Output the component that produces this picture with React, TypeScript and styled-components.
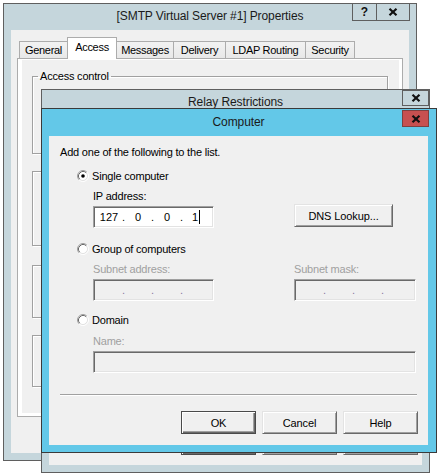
import React, { FC } from 'react';
import styled, { createGlobalStyle } from 'styled-components';

const GlobalStyle = createGlobalStyle`
	html, body {
		margin: 0;
		padding: 0;
		background: #fff;
	}
	body {
		font-family: 'Liberation Sans', Arial, sans-serif;
		font-size: 11px;
		color: #000;
	}
`;

const Desktop = styled.div`
	position: relative;
	width: 438px;
	height: 476px;
	overflow: hidden;
	background: #fff;
`;

// windows sit on the desktop at their own coordinates
const Window = styled.div<{ $x: number; $y: number; $w: number; $h: number; $active?: boolean; $pr?: number }>`
	position: absolute;
	left: ${(p) => p.$x}px;
	top: ${(p) => p.$y}px;
	width: ${(p) => p.$w}px;
	height: ${(p) => p.$h}px;
	box-sizing: border-box;
	border: 1px solid ${(p) => (p.$active ? '#3a3a3a' : '#5f5f5f')};
	background: ${(p) => (p.$active ? '#63c8e8' : '#c5d6dc')};
	padding: 0 ${(p) => p.$pr ?? 7}px 7px 7px;
	display: flex;
	flex-direction: column;
`;

const TitleBar = styled.div<{ $h: number }>`
	height: ${(p) => p.$h}px;
	flex-shrink: 0;
	display: flex;
	align-items: center;
	justify-content: center;
	padding-bottom: 2px;
	box-sizing: border-box;
	font-size: 12px;
	letter-spacing: -0.1px;
	color: #1a1a1a;
`;

const Caption = styled.div<{ $right: number; $top: number }>`
	position: absolute;
	top: ${(p) => p.$top}px;
	right: ${(p) => p.$right}px;
	display: flex;
`;

const CaptionButton = styled.div<{ $w: number; $h: number; $red?: boolean; $boxed?: boolean }>`
	width: ${(p) => p.$w}px;
	height: ${(p) => p.$h}px;
	box-sizing: border-box;
	display: flex;
	align-items: center;
	justify-content: center;
	background: ${(p) => (p.$red ? '#c75050' : '#c5d6dc')};
	border: 1px solid ${(p) => (p.$red ? '#7d4040' : '#5f5f5f')};
	border-top-width: ${(p) => (p.$boxed ? 1 : 0)}px;
	font-weight: bold;
	font-size: 12px;
	color: #111;
	& + & {
		margin-left: -1px;
	}
`;

const Client = styled.div`
	flex: 1;
	background: #f0f0f0;
	display: flex;
	flex-direction: column;
	min-height: 0;
`;

const PropsClient = styled(Client)`
	padding: 7px 6px 0 6px;
`;

const TabStrip = styled.div`
	display: flex;
	align-items: flex-end;
	height: 21px;
	padding-left: 2px;
	position: relative;
	z-index: 1;
`;

const Tab = styled.div<{ $w: number; $active?: boolean }>`
	width: ${(p) => p.$w}px;
	height: ${(p) => (p.$active ? 22 : 17)}px;
	margin-bottom: ${(p) => (p.$active ? -1 : 0)}px;
	box-sizing: border-box;
	border: 1px solid #acacac;
	border-bottom: none;
	background: ${(p) => (p.$active ? '#fff' : 'linear-gradient(#f2f2f2, #e8e8e8)')};
	position: relative;
	z-index: ${(p) => (p.$active ? 2 : 1)};
	display: flex;
	align-items: center;
	justify-content: center;
	padding-bottom: ${(p) => (p.$active ? 3 : 0)}px;
	letter-spacing: -0.3px;
	& + & {
		margin-left: -1px;
	}
`;

const TabPanel = styled.div`
	height: 359px;
	box-sizing: border-box;
	border: 1px solid #acacac;
	background: #fff;
	padding: 1px 3px 3px 4px;
	display: flex;
`;

const Page = styled.div`
	flex: 1;
	background: #f0f0f0;
	padding: 10px 0 0 10px;
	display: flex;
	flex-direction: column;
`;

const Group = styled.fieldset<{ $h: number; $mt?: number }>`
	margin: ${(p) => p.$mt ?? 0}px 0 0 0;
	padding: 0;
	width: 356px;
	height: ${(p) => p.$h}px;
	box-sizing: border-box;
	border: 1px solid #a0a0a0;
	box-shadow: inset 1px 1px 0 #fff, 1px 1px 0 #fff;
	min-inline-size: 0;
`;

const Legend = styled.legend`
	margin-left: 5px;
	padding: 0 2px;
	line-height: 13px;
	letter-spacing: -0.2px;
`;

const RelayClient = styled(Client)`
	justify-content: flex-end;
	padding: 0 4px 10px 0;
`;

const ComputerClient = styled(Client)`
	padding: 10px 10px 11px 11px;
`;

const Text = styled.div<{ $mt?: number; $ml?: number; $disabled?: boolean }>`
	margin-top: ${(p) => p.$mt ?? 0}px;
	margin-left: ${(p) => p.$ml ?? 0}px;
	line-height: 13px;
	height: 13px;
	letter-spacing: -0.2px;
	color: ${(p) => (p.$disabled ? '#a0a0a0' : '#000')};
	white-space: nowrap;
`;

const RadioRow = styled.div<{ $mt: number }>`
	margin-top: ${(p) => p.$mt}px;
	margin-left: 17px;
	height: 14px;
	line-height: 13px;
	display: flex;
	align-items: center;
	gap: 3px;
	letter-spacing: -0.2px;
`;

const RadioBox = styled.svg`
	width: 12px;
	height: 12px;
	flex-shrink: 0;
`;

const FieldGrid = styled.div<{ $mt: number }>`
	margin-top: ${(p) => p.$mt}px;
	margin-left: 33px;
	display: grid;
	grid-template-columns: 121px 122px;
	column-gap: 80px;
	row-gap: 3px;
	align-items: start;
`;

const Field = styled.div<{ $disabled?: boolean; $w?: number; $ml?: number; $mt?: number }>`
	width: ${(p) => (p.$w ? `${p.$w}px` : 'auto')};
	margin-left: ${(p) => p.$ml ?? 0}px;
	margin-top: ${(p) => p.$mt ?? 0}px;
	height: 22px;
	box-sizing: border-box;
	border: 1px solid;
	border-color: #a0a0a0 #fff #fff #a0a0a0;
	box-shadow: inset 1px 1px 0 #696969, inset -1px -1px 0 #e3e3e3;
	background: ${(p) => (p.$disabled ? '#f0f0f0' : '#fff')};
	display: flex;
	align-items: center;
	padding-left: 3px;
	color: ${(p) => (p.$disabled ? '#8a7aa0' : '#000')};
`;

const Octet = styled.span`
	width: 24px;
	text-align: center;
	display: flex;
	justify-content: center;
	align-items: center;
	line-height: 13px;
`;

const Dot = styled.span`
	width: 5px;
	text-align: center;
	line-height: 13px;
`;

const Caret = styled.span`
	display: inline-block;
	width: 1px;
	height: 14px;
	margin-left: 1px;
	background: #000;
`;

const Separator = styled.div`
	margin: 21px 1px 0 0;
	height: 0;
	border-top: 1px solid #a0a0a0;
	border-bottom: 1px solid #fff;
`;

const ButtonRow = styled.div<{ $mt?: number }>`
	margin-top: ${(p) => p.$mt ?? 0}px;
	display: flex;
	justify-content: flex-end;
	gap: 6px;
`;

const Button = styled.div<{ $w?: number; $default?: boolean; $mt?: number }>`
	width: ${(p) => p.$w ?? 75}px;
	height: 23px;
	margin-top: ${(p) => p.$mt ?? 0}px;
	box-sizing: border-box;
	border: 1px solid;
	border-color: ${(p) => (p.$default ? '#4a4a4a' : '#e3e3e3 #696969 #696969 #e3e3e3')};
	box-shadow: ${(p) =>
		p.$default
			? 'inset 1px 1px 0 #fff, inset -1px -1px 0 #696969, inset -2px -2px 0 #a0a0a0'
			: 'inset 1px 1px 0 #fff, inset -1px -1px 0 #a0a0a0'};
	background: #f0f0f0;
	display: flex;
	align-items: center;
	justify-content: center;
	letter-spacing: -0.1px;
`;

const CloseGlyph: FC = () => (
	<svg width="10" height="8" viewBox="0 0 10 8">
		<path d="M1.5 0.8 L8.5 7.2 M8.5 0.8 L1.5 7.2" stroke="#111" strokeWidth="2.2" />
	</svg>
);

const Radio: FC<{ checked?: boolean }> = ({ checked }) => (
	<RadioBox viewBox="0 0 12 12">
		<circle cx="6" cy="6" r="4.5" fill="#fff" />
		<path d="M2.11 9.89A5.5 5.5 0 0 1 9.89 2.11" fill="none" stroke="#a0a0a0" />
		<path d="M9.89 2.11A5.5 5.5 0 0 1 2.11 9.89" fill="none" stroke="#fff" />
		<path d="M2.82 9.18A4.5 4.5 0 0 1 9.18 2.82" fill="none" stroke="#696969" />
		<path d="M9.18 2.82A4.5 4.5 0 0 1 2.82 9.18" fill="none" stroke="#e3e3e3" />
		{checked && <circle cx="6" cy="6" r="1.8" fill="#000" />}
	</RadioBox>
);

const IpField: FC<{ octets?: string[]; disabled?: boolean; caret?: boolean }> = ({
	octets = ['', '', '', ''],
	disabled,
	caret,
}) => (
	<Field $disabled={disabled}>
		{octets.map((o, i) => (
			<React.Fragment key={i}>
				{i > 0 && <Dot>.</Dot>}
				<Octet>
					{o}
					{caret && i === 3 ? <Caret /> : null}
				</Octet>
			</React.Fragment>
		))}
	</Field>
);

const tabs = [
	{ label: 'General', w: 49 },
	{ label: 'Access', w: 50, active: true },
	{ label: 'Messages', w: 58 },
	{ label: 'Delivery', w: 53 },
	{ label: 'LDAP Routing', w: 81 },
	{ label: 'Security', w: 50 },
];

const App: FC = () => {
	return (
		<Desktop>
			<GlobalStyle />

			{/* back window: server properties */}
			<Window $x={3} $y={3} $w={414} $h={458}>
				<TitleBar $h={26}>[SMTP Virtual Server #1] Properties</TitleBar>
				<Caption $right={6} $top={0}>
					<CaptionButton $w={25} $h={17}>?</CaptionButton>
					<CaptionButton $w={34} $h={17}>
						<CloseGlyph />
					</CaptionButton>
				</Caption>
				<PropsClient>
					<TabStrip>
						{tabs.map((t) => (
							<Tab key={t.label} $w={t.w} $active={t.active}>
								{t.label}
							</Tab>
						))}
					</TabStrip>
					<TabPanel>
						<Page>
							<Group $h={84}>
								<Legend>Access control</Legend>
							</Group>
							{/* the other groups are hidden behind the dialogs */}
							<Group $h={75} $mt={17} />
							<Group $h={53} $mt={19} />
							<Group $h={52} $mt={17} />
						</Page>
					</TabPanel>
				</PropsClient>
			</Window>

			{/* middle window: relay restrictions */}
			<Window $x={41} $y={89} $w={389} $h={384}>
				<TitleBar $h={26}>Relay Restrictions</TitleBar>
				<Caption $right={0} $top={0}>
					<CaptionButton $w={27} $h={16} $boxed>
						<CloseGlyph />
					</CaptionButton>
				</Caption>
				<RelayClient>
					<ButtonRow>
						<Button $default>OK</Button>
						<Button>Cancel</Button>
						<Button>Help</Button>
					</ButtonRow>
				</RelayClient>
			</Window>

			{/* front window: computer */}
			<Window $x={41} $y={108} $w={396} $h={345} $active $pr={8}>
				<TitleBar $h={27}>Computer</TitleBar>
				<Caption $right={7} $top={1}>
					<CaptionButton $w={27} $h={17} $red $boxed>
						<CloseGlyph />
					</CaptionButton>
				</Caption>
				<ComputerClient>
					<Text>Add one of the following to the list.</Text>

					<RadioRow $mt={10}>
						<Radio checked />
						Single computer
					</RadioRow>
					<Text $mt={7} $ml={33}>
						IP address:
					</Text>
					<FieldGrid $mt={3}>
						<IpField octets={['127', '0', '0', '1']} caret />
						<Button $w={99} $mt={-2}>
							DNS Lookup...
						</Button>
					</FieldGrid>

					<RadioRow $mt={14}>
						<Radio />
						Group of computers
					</RadioRow>
					<FieldGrid $mt={7}>
						<Text $disabled>Subnet address:</Text>
						<Text $disabled>Subnet mask:</Text>
						<IpField disabled />
						<IpField disabled />
					</FieldGrid>

					<RadioRow $mt={12}>
						<Radio />
						Domain
					</RadioRow>
					<Text $mt={8} $ml={33} $disabled>
						Name:
					</Text>
					<Field $disabled $ml={33} $mt={3} $w={323} />

					<Separator />

					<ButtonRow $mt={15}>
						<Button $default>OK</Button>
						<Button>Cancel</Button>
						<Button>Help</Button>
					</ButtonRow>
				</ComputerClient>
			</Window>
		</Desktop>
	);
};

export default App;
